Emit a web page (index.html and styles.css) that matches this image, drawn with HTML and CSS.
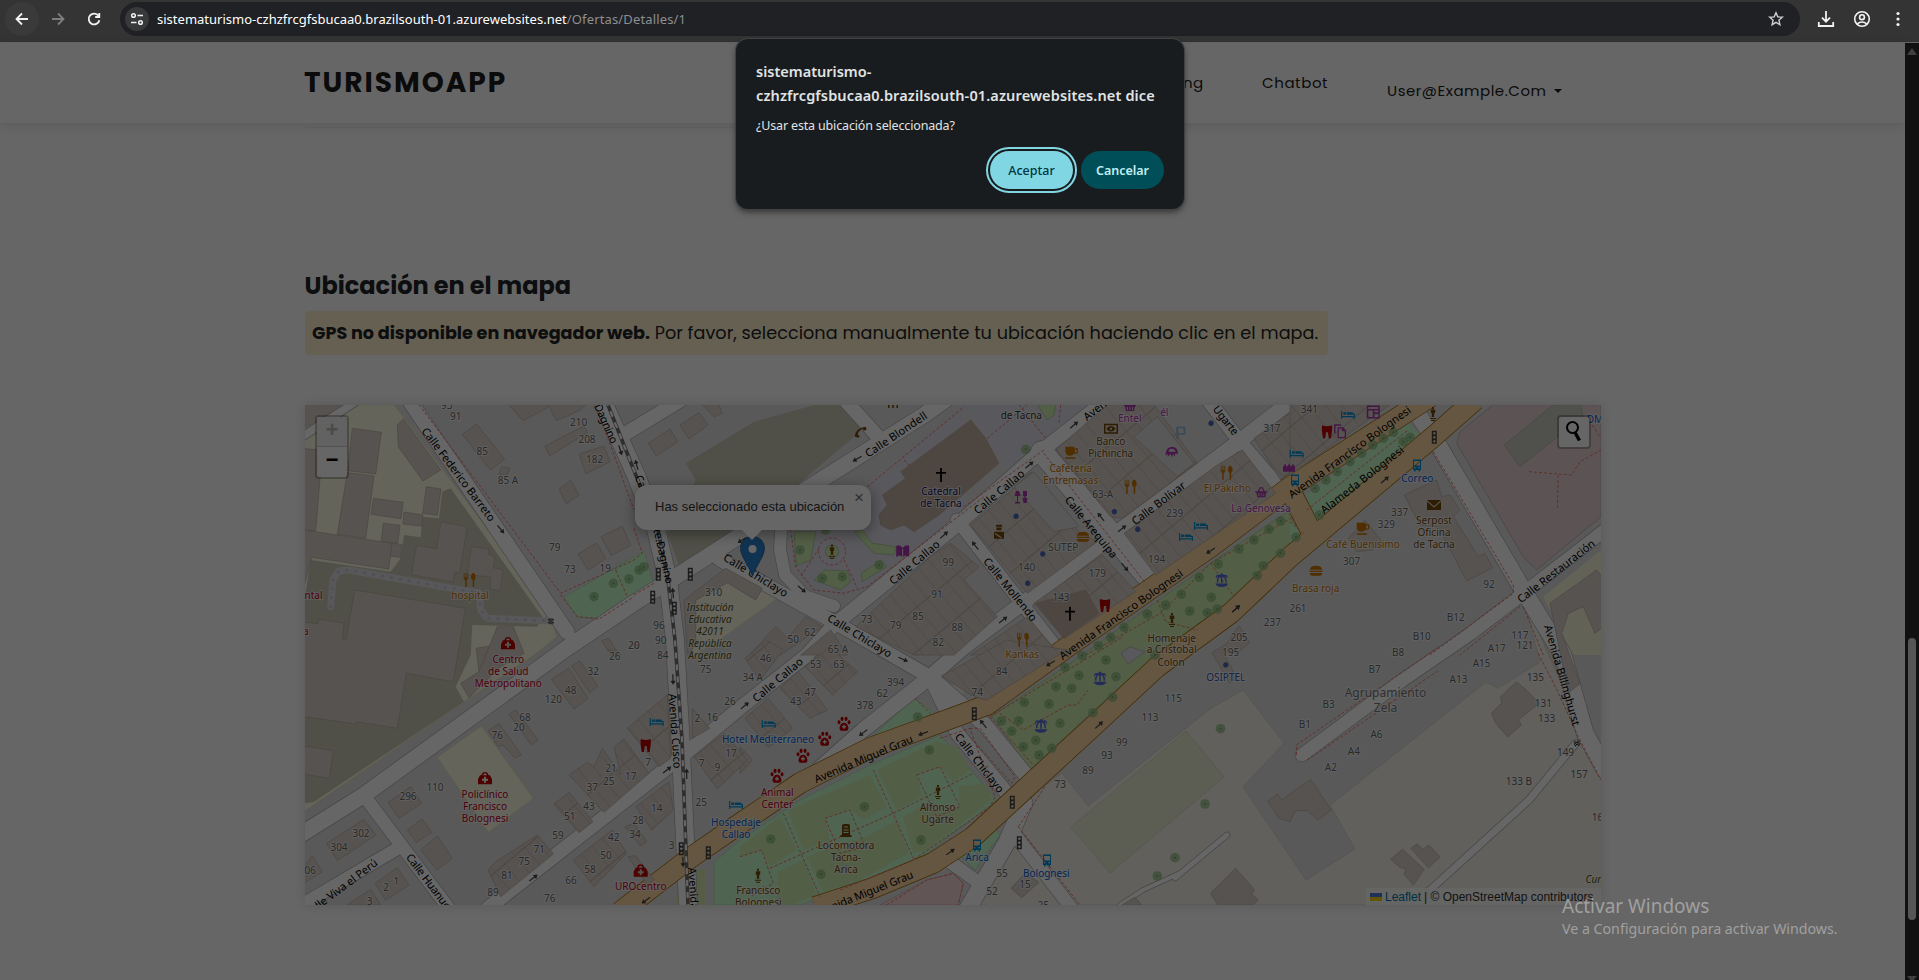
FILE: index.html
```html
<!DOCTYPE html>
<html lang="es">
<head>
<meta charset="utf-8">
<title>TurismoApp - Detalles</title>
<link rel="stylesheet" href="styles.css">
</head>
<body>
<div class="browser">
  <div class="toolbar">
    <div class="nav-icons">
      <svg class="back" width="34" height="34" viewBox="-17 -17 34 34"><path d="M6 0H-5M0 -5.5L-5.5 0L0 5.5"/></svg>
      <svg class="forward" width="34" height="34" viewBox="-17 -17 34 34"><path d="M-6 0H5M0 -5.5L5.5 0L0 5.5"/></svg>
      <svg class="reload" width="34" height="34" viewBox="-17 -17 34 34"><path d="M4.6 -3A5.4 5.4 0 1 0 5.4 1.2M5.3 -6V-2H1.2"/></svg>
    </div>
    <div class="omnibox">
      <span class="chip"><svg width="14" height="14" viewBox="0 0 14 14"><circle cx="3.5" cy="3.5" r="1.8"/><path d="M7.5 3.5H13M1 10.5H6.500"/><circle cx="10.500" cy="10.500" r="1.800"/></svg></span>
      <span class="url"><span class="host">sistematurismo-czhzfrcgfsbucaa0.brazilsouth-01.azurewebsites.net</span><span class="path">/Ofertas/Detalles/1</span></span>
      <svg class="star" width="18" height="18" viewBox="-9 -9 18 18"><path d="M0 -6.300L1.800 -2.100L6.300 -1.800L2.900 1.200L3.900 5.700L0 3.300L-3.900 5.700L-2.900 1.200L-6.300 -1.800L-1.800 -2.100Z"/></svg>
    </div>
    <div class="tool-icons">
      <svg width="20" height="20" viewBox="-10 -10 20 20"><path d="M0 -8V2.500M-4 -1.300L0 2.700L4 -1.300M-7.200 3V7H7.200V3"/></svg>
      <svg class="thin" width="20" height="20" viewBox="-10 -10 20 20"><circle r="7.300"/><circle cy="-1.800" r="2.400"/><path d="M-5 5.200Q0 .8 5 5.200"/></svg>
      <svg class="dots" width="20" height="20" viewBox="-10 -10 20 20"><circle cy="-5.500" r="1.600"/><circle r="1.600"/><circle cy="5.500" r="1.600"/></svg>
    </div>
  </div>
  <div class="viewport">
    <div class="page">
      <header class="site-header">
        <div class="brand">TURISMOAPP</div>
        <nav class="site-nav">
          <span class="link-ng">ng</span>
          <span class="link-chat">Chatbot</span>
          <span class="link-user"><span>User@Example.Com</span><i class="caret"></i></span>
        </nav>
      </header>
      <div class="card-end"></div>
      <main class="content">
        <h2 class="title">Ubicación en el mapa</h2>
        <p class="notice"><b>GPS no disponible en navegador web.</b> <span>Por favor, selecciona manualmente tu ubicación haciendo clic en el mapa.</span></p>
        <div class="map">
          <svg id="tiles" class="tiles" viewBox="305 405 1296 500" width="1296" height="500"></svg>
          <div class="zoom-control"><span class="zoom-in">+</span><span class="zoom-out">−</span></div>
          <div class="search-control"><svg width="30" height="30" viewBox="0 0 30 30"><circle cx="13.500" cy="10.500" r="5.500"/><path d="M16 15.500L20.500 23.500"/></svg></div>
          <svg class="pin" width="25" height="41" viewBox="0 0 25 41"><path d="M12.500 .5C5.500 .5 .6 5.800 .6 12.500C.6 20 8 28 12.500 40C17 28 24.400 20 24.400 12.500C24.400 5.800 19.500 .5 12.500 .5Z"/><circle cx="12.500" cy="13" r="4"/></svg>
          <div class="popup">Has seleccionado esta ubicación<span class="close">×</span></div>
          <div class="attribution"><i class="flag"></i><a>Leaflet</a> <span>| © OpenStreetMap contributors</span></div>
        </div>
      </main>
    </div>
    <div class="scrollbar"><i class="arrow-up"></i><i class="thumb"></i><i class="arrow-down"></i></div>
    <div class="shade"></div>
  </div>
  <div class="dialog">
    <div class="dialog-title"><span>sistematurismo-</span><span class="wide">czhzfrcgfsbucaa0.brazilsouth-01.azurewebsites.net dice</span></div>
    <div class="dialog-text">¿Usar esta ubicación seleccionada?</div>
    <div class="dialog-buttons"><button class="accept">Aceptar</button><button class="cancel">Cancelar</button></div>
  </div>
  <div class="watermark"><div class="wm-title">Activar Windows</div><div class="wm-text">Ve a Configuración para activar Windows.</div></div>
</div>
<script src="map.js"></script>
</body>
</html>
```
FILE: styles.css
```css
* { box-sizing: border-box; }
body { margin: 0; overflow: hidden; font-family: "Poppins", Inter, sans-serif; }
.browser { position: relative; width: 1919px; height: 980px; display: flex; flex-direction: column; overflow: hidden; }
.toolbar { height: 42px; flex: none; display: flex; align-items: flex-start; background: #343434; padding-top: 2px; font-family: "Noto Sans", sans-serif; }
.toolbar svg { fill: none; stroke: #f2f2f2; stroke-width: 1.8; }
.nav-icons { display: flex; width: 120px; padding-left: 5px; gap: 2px; }
.nav-icons .back { background: #3a3a3a; border-radius: 17px; }
.nav-icons .forward { stroke: #7e7e7e; }
.omnibox { width: 1680px; height: 34px; border-radius: 17px; background: #202124; display: flex; align-items: center; padding: 0 15px 0 5px; }
.chip { width: 24px; height: 24px; border-radius: 12px; background: #38393b; display: grid; place-items: center; margin-right: 8px; }
.chip svg { stroke-width: 1.5; }
.url { flex: 1; font-size: 13px; white-space: nowrap; color: #8d8f91; }
.host { color: #fff; letter-spacing: 0.01px; }
.path { letter-spacing: 0.15px; }
.toolbar .star { stroke: #cfcfcf; stroke-width: 1.4; }
.tool-icons { display: flex; align-items: center; height: 34px; gap: 16px; padding-left: 16px; }
.tool-icons .thin { stroke-width: 1.6; }
.toolbar .dots { fill: #f2f2f2; stroke: none; }

.viewport { position: relative; flex: 1; display: flex; background: #fff; }
.page { flex: 1; padding-top: 1px; }
.site-header { height: 80px; display: flex; padding-left: 304px; box-shadow: 0 2px 12px rgba(0,0,0,.12); color: #1c1c1c; }
.brand { width: 879px; padding-top: 21px; font-size: 28px; font-weight: 700; line-height: 38px; letter-spacing: 2px; }
.site-nav { display: flex; font-size: 15px; line-height: 20px; font-weight: 400; }
.link-ng { width: 79px; padding-top: 30px; letter-spacing: .3px; }
.link-chat { width: 125px; padding-top: 30px; letter-spacing: .6px; }
.link-user { padding-top: 38px; display: flex; letter-spacing: .5px; }
.caret { margin: 8px 0 0 8px; width: 8px; height: 4px; border: 4px solid transparent; border-top-color: #1c1c1c; border-bottom: 0; }
.card-end { width: 600px; height: 5px; margin-left: 305px; border-bottom: 1px solid #e6e6e6; }
.content { padding: 140px 0 0 305px; color: #212529; }
.title { margin: 0; height: 43px; font-size: 24px; line-height: 36px; font-weight: 700; color: #212529; text-indent: -.5px; }
.notice { margin: 0 0 50px; width: 1023px; height: 44px; padding-left: 7px; border-radius: 4px; background: #fff0cc; font-size: 17.6px; line-height: 44px; white-space: nowrap; }
.notice span { letter-spacing: .06px; }

.map { position: relative; width: 1296px; height: 500px; box-shadow: 0 0 12px rgba(0,0,0,.14); font-family: "Liberation Sans", Arial, sans-serif; }
.tiles { display: block; font-family: "Noto Sans", sans-serif; }
.tiles text { text-anchor: middle; dominant-baseline: central; paint-order: stroke; stroke: rgba(255,255,255,.6); stroke-width: 2px; stroke-linejoin: round; font-size: 10px; }
.tiles .num { fill: #666; }
.tiles .street { fill: #000; font-size: 11px; stroke: none; }
.tiles .food { fill: #c77400; }
.tiles .health { fill: #bf0018; }
.tiles .hotel { fill: #0060d8; }
.tiles .shop { fill: #ac39ac; }
.tiles .civic { fill: #734a08; }
.tiles .church { fill: #15156b; }
.tiles .office { fill: #3a55b0; }
.tiles .plain { fill: #333; }
.tiles .school { fill: #555512; font-style: italic; }
.tiles .place { fill: #777; font-size: 12px; }
.zoom-control { position: absolute; left: 10px; top: 10px; width: 34px; height: 64px; border: 2px solid rgba(0,0,0,.25); border-radius: 4px; display: flex; flex-direction: column; background: #fff; background-clip: padding-box; font: 700 22px/29px "Liberation Mono", monospace; text-align: center; }
.zoom-in { height: 30px; border-bottom: 1px solid #ccc; color: #bbb; background: #f4f4f4; }
.zoom-out { height: 30px; color: #000; }
.search-control { position: absolute; left: 1252px; top: 10px; width: 34px; height: 34px; border: 2px solid rgba(0,0,0,.25); border-radius: 4px; background: #fff; background-clip: padding-box; }
.search-control svg { display: block; fill: none; stroke: #000; stroke-width: 2; }
.search-control path { stroke-width: 3.4; }
.pin { position: absolute; left: 435px; top: 131px; fill: #2a81cb; stroke: #2369a5; }
.pin circle { fill: #fff; stroke: none; }
.popup { position: absolute; left: 330px; top: 80px; width: 236px; height: 45px; padding-left: 20px; border-radius: 12px; background: #fff; box-shadow: 0 3px 14px rgba(0,0,0,.4); color: #333; font-size: 13px; line-height: 44px; white-space: nowrap; }
.popup::after { content: ""; position: absolute; left: 107px; top: 45px; border: 10px solid transparent; border-top-color: #fff; border-bottom: 0; }
.close { position: absolute; right: 7px; top: 1px; font-size: 17px; line-height: 24px; color: #757575; }
.attribution { position: absolute; right: 0; bottom: 0; width: 235px; height: 17px; padding-left: 4px; display: flex; align-items: center; gap: 3px; background: rgba(255,255,255,.8); font-size: 12px; white-space: nowrap; color: #333; }
.attribution a { color: #0078a8; }
.flag { width: 12px; height: 8px; background: linear-gradient(#4c7be1 50%, #ffd500 50%); }

.scrollbar { position: relative; width: 14px; background: #2c2c2c; margin-top: 1px; display: flex; flex-direction: column; align-items: center; }
.arrow-up { margin-top: 5px; border: 5px solid transparent; border-bottom: 7px solid #9f9f9f; border-top: 0; }
.thumb { margin-top: 583px; width: 8px; height: 282px; border-radius: 4px; background: #d8d8d8; }
.arrow-down { margin-top: 56px; border: 5px solid transparent; border-top: 6px solid #9f9f9f; border-bottom: 0; }
.shade { position: absolute; inset: 0; background: rgba(0,0,0,.6); }

.dialog { position: absolute; left: 736px; top: 39px; width: 448px; height: 170px; padding: 20px 20px 0; border-radius: 12px; background: #181c1e; box-shadow: 0 0 0 1px #3f4142, 0 3px 6px rgba(0,0,0,.5); color: #e1e3e4; font-family: "Noto Sans", sans-serif; }
.dialog-title { display: flex; flex-direction: column; font-size: 14.500px; line-height: 24px; font-weight: 600; white-space: nowrap; }
.dialog-title .wide { letter-spacing: .13px; }
.dialog-text { margin-top: 9px; font-size: 12.500px; line-height: 20px; letter-spacing: -.16px; white-space: nowrap; }
.dialog-buttons { margin-top: 15px; display: flex; justify-content: flex-end; gap: 8px; }
.dialog-buttons button { width: 83px; height: 38px; border: 0; border-radius: 19px; padding: 0; font: 500 12.500px "Noto Sans", sans-serif; }
.accept { background: #80d7e3; color: #00363d; outline: 2px solid #80d7e3; outline-offset: 2px; }
.dialog-buttons .cancel { background: #004f58; color: #c2eef4; font-weight: 600; }
.watermark { position: absolute; left: 1562px; top: 892px; font-family: "Noto Sans", sans-serif; color: #a0a0a0; white-space: nowrap; }
.wm-title { font-size: 19px; line-height: 28px; }
.wm-text { font-size: 14.200px; line-height: 18px; }
```
FILE: map.js
```js
// Each sector is drawn in its own survey units: origin x, origin y, x scale, y scale.
const S = {
  a: [304, 400, 1 / 3, 1 / 3], b: [634, 400, 1 / 3, 1 / 3], c: [964, 400, 1 / 3, 1 / 3],
  d: [1290, 400, 1 / 3, 1 / 3], e: [304, 650, 1 / 3, 1 / 3], f: [740, 650, 1 / 3, 1 / 3],
  g: [1180, 600, 739 / 1568, 1 / 3], p: [0, 0, 1, 1]
};
const tiles = document.getElementById('tiles');
const at = (s, x, y) => [+(S[s][0] + x * S[s][2]).toFixed(1), +(S[s][1] + y * S[s][3]).toFixed(1)];
const pts = (s, str) => str.trim().split(' ').map(p => at(s, ...p.split(',').map(Number)).join(',')).join(' ');
let out = `<defs><pattern id="lots" width="13" height="34" patternUnits="userSpaceOnUse" patternTransform="rotate(-40)">
<rect width="13" height="34" fill="#d9d0c9"/><path d="M0 0V34M0 .5H13" stroke="#bdaea3" stroke-width="1" fill="none"/></pattern></defs>
<rect x="305" y="405" width="1296" height="500" fill="#e0dfdf"/>`;
const poly = (s, fill, list, stroke = 'none') => list.split(';').forEach(l => {
  out += `<polygon points="${pts(s, l)}" fill="${fill}" stroke="${stroke}" stroke-width=".7"/>`;
});

// land cover
poly('p', '#f2efe9', '1210,709 1243,690 1284,743 1243,787 1306,880 1355,849 1330,805 1486,682 1498,688 1540,662 1524,600 1605,780 1605,905 975,905 1025,800 1043,787 1062,773 1088,806', '#cfcac2');
poly('p', '#e6ead0', '1071,827 1110,873 1224,777 1186,731', '#cdd3b4');
poly('a', '#fbfbe3', '0,14 270,14 410,200 740,640 758,710 690,765 480,905 0,1235', '#e0e0a8');
poly('a', '#c7c7b4', '440,265 415,275 405,355 355,350 350,412 300,405 290,475 260,515 20,480 0,610 0,1210 30,1205 480,905 455,860 500,765 505,675 700,680 715,650');
poly('d', '#e6d2d2', '500,130 510,95 610,14 933,14 933,350 740,510 700,470', '#b0a0a0');
poly('d', '#c9c7c1', '643,135 790,14 870,14 880,50 690,200', '#aaa');
poly('d', '#f4f4da', '760,590 933,450 933,765 850,765');
poly('b', '#c7c7b4', '155,190 360,65 545,14 635,14 690,85 490,255 330,390 135,495 100,400 185,240');
poly('e', '#fbfbe3', '400,322 532,228 688,445 553,547', '#e0e0a8');
poly('b', '#fbfbe3', '185,600 280,548 365,600 385,565 430,595 235,735 175,765', '#e6e6b4');
poly('b', '#dddde8', '465,385 480,500 530,565 620,585 700,565 990,340 990,14 700,260');
poly('c', '#dddde8', '0,14 385,14 130,205 65,115');
poly('b', '#cdebb0', '480,395 545,395 530,480 487,497;660,395 685,390 715,430 785,440 780,465 720,460;540,540 570,510 640,512 650,545 620,570;682,520 740,480 758,500 685,545', '#9fbf8a');
poly('c', '#cdebb0', '220,14 275,14 270,45 250,60', '#9fbf8a');
poly('p', '#c8facc', '564,597 644,551 654,585 599,618 577,617;914,698 940,717 863,745;940,735 870,765 800,800 740,840 714,862 714,905 800,905 870,880 925,855 997,800;990,820 1000,835 975,870 960,855', '#a8d8ac');
poly('p', '#cdebb0', '1287,512 1303,536 1222,607 1150,660 1092,712 1030,770 992,716 1075,660 1215,560', '#a9c88c');
poly('d', '#c8facc', '20,305 350,60 390,105 75,380;0,365 45,400 0,445');
poly('f', '#cdebb0', '410,360 590,275 650,290 690,360 640,395 600,350 530,375 545,440 470,480;145,480 390,375 440,470 370,510 330,480 255,505 270,570 190,600;490,500 560,460 660,470 655,410 740,400 755,450 560,600 520,610;200,620 280,590 380,560 470,510 505,610 360,690 250,725;0,590 120,500 170,600 90,650 65,600 0,620;115,665 190,630 230,735 150,765 110,765');
poly('e', '#d5e8b0', '1135,665 1205,655 1205,765 1110,765');
poly('f', '#f2d5d5', '420,765 560,690 640,670 670,700 655,765', '#d0a0a0');
poly('f', '#f2efe9', '575,110 700,100 605,195;740,765 805,575 985,765');

// roads
const roads = [
  ['409,400 567,632', 15], ['300,835 364,795 567,648 634,603 691,567 744,533 794,497 924,415 945,400', 16],
  ['602,400 636,475 655,525 668,580 675,640 680,730 688,905', 18],
  ['719,559 834,622 885,651 930,677 957,733 1010,797', 14],
  ['488,908 681,757 740,708 807,655 834,625 957,525 1041,451 1100,405', 14],
  ['820,768 863,730 930,677 964,647 1031,597 1111,537 1237,443 1286,405', 15],
  ['957,520 1058,650', 13], ['1042,452 1153,583', 22], ['1208,400 1241,443 1283,492', 14],
  ['782,515 780,550 785,575 805,596 834,606', 12], ['845,400 881,440', 14], ['620,437 684,398', 14],
  ['930,677 985,725 1030,780', 15], ['1405,395 1437,443 1523,590 1563,655 1585,733 1605,770', 17],
  ['1605,530 1525,592 1470,634 1400,682 1302,755', 13], ['300,906 400,847', 13], ['365,797 450,910', 13],
  ['1024,803 1007,842 967,910', 17], ['1015,835 1073,910', 13], ['950,862 975,880', 13],
  ['1430,890 1529,800 1576,743', 7], ['1175,878 1227,835', 5], ['1120,905 1143,890 1180,873', 4], ['305,435 355,402', 8]
];
const line = (p, w, c, extra = '') => { out += `<polyline points="${p}" fill="none" stroke="${c}" stroke-width="${w}" stroke-linejoin="round" ${extra}/>`; };
roads.forEach(r => line(r[0], r[1] + 1.4, '#aaa', 'stroke-linecap="round"'));
roads.forEach(r => line(r[0], r[1], '#fff', 'stroke-linecap="round"'));
const main = ['1430,397 1290,487 1212,546 1070,645 987,705 955,717 870,748 800,783 735,827 690,858 620,912',
  '1475,400 1433,437 1290,557 1231,613 1157,667 1100,720 1013,800 973,837 933,863 873,888 815,907', '1290,490 1312,533'];
main.forEach(p => line(p, 21.5, '#a06b00'));
main.forEach(p => line(p, 20, '#fcd6a4'));
line('606,400 637,478 657,525 668,580 675,640 682,740 688,905', 3.6, '#707070');
line('606,400 637,478 657,525 668,580 675,640 682,740 688,905', 2.2, '#fff', 'stroke-dasharray="6 6"');

// buildings
const B = '#d9d0c9', E = '#b9a99c';
poly('a', B, '145,85 232,97 215,222 132,212;130,218 210,228 185,415 100,403;298,57 410,210 357,243 283,140 280,75;367,260 411,267 400,346 356,340;208,295 297,307 291,356 202,343;300,336 356,345 353,378 297,372;238,370 288,376 281,430 232,423;262,428 294,434 290,472 258,468;0,146 55,150 35,392 0,390;0,390 264,430 254,507 23,472 0,560;411,366 490,380 467,518 452,517 447,546 322,524 338,436 398,447;502,440 556,448 552,462 573,470 568,503 597,510 588,572 558,567 560,530 490,525;152,570 484,625 448,845 307,820 280,985 157,965 155,972 0,950 0,665 40,672 45,658 120,670 115,718 127,718;0,1038 88,1052 76,1135 0,1122;517,745 558,738 575,800 525,815;580,680 628,680 660,760 590,800 495,893 470,850 525,815;0,14 120,14 0,85;615,14 740,14 733,22 657,62;733,14 845,14 830,30 757,62;475,103 518,72 602,178 559,210;723,138 840,78 850,98 736,168;826,162 900,138 918,185 845,221;765,268 800,241 825,284 787,312;822,462 878,429 905,475 853,511;891,410 955,379 980,436 921,466;593,200 617,205 610,225 585,222;893,722 915,715 945,765 925,770', E);
poly('b', B, '137,75 195,38 222,75 165,117;43,130 108,87 131,125 67,168;205,14 255,14 265,40 240,50;150,600 275,505 385,565 365,600 280,548 185,600 185,735 160,765;345,765 425,680 460,715 515,650 565,680 440,765;500,765 590,690 640,765', E);
poly('b', '#c4b0a2', '990,75 800,215 815,235 745,285 760,315 735,345 740,375 770,390 810,375 840,395 915,345 1095,190 1055,115 1010,60', E);
poly('c', 'url(#lots)', '20,375 150,265 200,215 345,395 400,425 190,580;275,150 430,14 570,14 700,190 475,355 440,350;480,400 760,195 835,150 935,280 575,525;210,610 415,465 515,575 300,715;20,765 190,650 275,750;870,115 990,30 990,210 950,240', E);
poly('c', '#c4b0a2', '215,610 365,570 405,640 300,715', E);
poly('c', '#dcdcdc', '150,260 210,215 345,380 270,395;510,110 580,50 690,190 640,230', E);
poly('b', 'url(#lots)', '665,680 895,465 950,430 1035,500 990,540 1090,650 960,765 840,765', E);
poly('f', 'url(#lots)', '605,78 800,-30 980,0 740,150 700,140;15,205 85,145 158,235 85,293;120,115 175,65 263,180 210,205;195,50 270,-10 352,65 278,135;15,25 80,-30 130,0 60,90;0,290 38,330 0,370', E);
poly('d', 'url(#lots)', '0,14 300,14 0,225', E);
poly('d', B, '343,285 440,240 455,290 480,285 510,330 490,350 565,470 585,460 608,503 530,543 450,390 440,380 390,375;175,415 225,360 280,430 245,450 200,455;780,610 920,510 960,560 990,640 915,700 880,620 835,640 815,700 870,850 835,880', E);
poly('e', B, '742,88 795,55 852,145 810,177;803,48 827,33 882,108 857,128;552,242 585,220 652,315 632,324 597,285 583,290;615,193 635,180 702,270 682,285;252,457 320,410 353,460 285,505;310,540 355,507 383,548 337,577;350,600 400,558 445,625 398,660;68,580 180,508 215,555 100,632;0,650 25,617 55,665 0,700;213,700 280,653 315,705 245,750;130,765 200,718 230,765;1165,175 1217,235 1165,265;972,620 995,617 1050,690 1030,705;962,530 990,520 1028,575 1010,588;910,0 950,15 940,0', E);
poly('e', 'url(#lots)', '795,375 850,337 870,350 895,295 950,375 930,290 960,267 1035,370 900,487;970,235 1090,135 1100,325 1065,350;750,462 795,427 867,515 825,548;552,660 575,635 700,555 748,612 590,740;808,630 925,540 968,610 870,710;995,470 1095,395 1108,480 1043,540;1170,320 1260,250 1330,330 1240,417', E);
poly('g', B, '186,603 207,582 215,600 277,538 321,630 293,660 270,632 245,632 233,665 210,655;65,880 118,805 158,870 152,882 166,900 155,915 80,915;447,778 472,748 518,808 495,856 475,822 480,808 465,800;490,745 503,732 515,748 528,735 552,771 527,804;661,340 683,308 680,290 714,246 735,270 762,310 718,360 724,375 695,411 670,370;68,158 100,130 125,77 148,128 120,160 90,150 120,235 105,248', E);
poly('f', B, '813,715 855,670 897,697 845,743;1145,765 1185,742 1205,765', E);
poly('f', '#dddde8', '1143,10 1170,-10 1215,5 1165,42', '#aaa');
const lane = pts('a', '80,620 87,540 105,512 135,510 440,565 525,578 530,630 550,655 730,662');
line(lane, 7, '#dcdce0', 'stroke-linecap="round"');
line(lane, 3, '#c6c6cc', 'stroke-dasharray=".1 9" stroke-linecap="round"');

// footpaths
const path = (s, list) => list.split(';').forEach(l => line(pts(s, l), 1, '#f0776c', 'stroke-dasharray="3 2"'));
path('a', '345,14 770,580 990,480;770,585 820,650 885,657 990,590;875,14 990,330;935,510 970,590');
path('b', '0,385 25,460 0,480;60,550 0,585;470,390 485,500 540,570 630,580 700,560 1050,290;700,260 990,20;555,445 500,530;630,480 670,565;810,180 830,200');
path('c', '70,115 190,14;165,14 245,115;290,14 285,70;0,320 240,150;365,765 590,640 740,490;580,600 605,665 700,690;740,490 810,590;240,160 545,550;740,490 990,350');
path('d', '430,155 670,555 670,580 420,765;690,620 510,765;700,620 760,765;717,215 845,225 870,185 933,150;805,225 802,330;50,330 355,90;0,365 45,405;890,50 933,115');
path('g', '247,465 247,435 550,140;270,480 550,210;760,160 800,270 845,410 893,540');
path('f', '750,200 1150,-40;750,200 880,345;780,190 850,240 985,165 1010,165 1045,120;600,265 690,235 765,440 750,470 520,630 300,720;690,235 720,235 825,380 815,400 690,260;525,145 580,200;400,360 520,625;130,490 240,740;90,655 470,485 700,370;530,375 600,350 660,470 590,500 530,375;255,505 330,480 375,590 300,610 255,505;0,620 65,600 100,700 30,740;835,530 1020,765;835,530 915,410;440,765 560,690 640,670 670,700 655,765');
out += `<circle cx="832" cy="551.5" r="13.500" fill="none" stroke="#f0776c" stroke-dasharray="3 2"/><circle cx="832" cy="551.5" r="6.500" fill="#cdebb0" stroke="#9fbf8a"/>`;
const trees = { a: '870,590 928,550 975,537', b: '15,510 30,500 498,450 565,535 625,530 735,495 575,390', c: '950,363 915,388 870,420 825,447 763,492 950,460 898,497 880,527 706,532 652,583 742,592 605,615 550,642 677,633 730,638 760,627 480,682 440,712 403,737 185,148', d: '88,345 18,412 108,240 142,215 180,185 215,160 248,135 280,115 310,97 340,125 360,112 75,265', f: '533,201 568,300 373,470 92,567 243,673 543,570 853,157 948,110 1017,76 1098,30 1026,17 995,115 927,162 1128,80 1118,142 1059,188 960,220 836,212 784,213 815,244 850,290 887,271 897,315 935,295 975,52 1305,623 1252,678 1245,15', g: '86,386 53,612' };
for (const k in trees) trees[k].split(' ').forEach(t => { const [x, y] = at(k, ...t.split(',').map(Number)); out += `<circle cx="${x}" cy="${y}" r="4.800" fill="#8fbd80" opacity=".75"/><circle cx="${x}" cy="${y}" r="1" fill="#7a9e6a"/>`; });

// point symbols
const icons = {
  fork: ['#c77400', 'M-6 -7V-2Q-6 0 -4.500 0V7H-3V0Q-1.500 0 -1.500 -2V-7H-2.300V-2.500H-3.300V-7H-4.200V-2.500H-5.200V-7ZM3.500 -7C1 -7 .5 -1 3 0V7H4.500V0C7 -1 6 -7 3.500 -7Z'],
  bed: ['#0092da', 'M-7 -4H-5.800V1.300H5.800V-1H7V4H5.800V2.600H-5.800V4H-7ZM-4.800 -2.500H-2V0H-4.800ZM-1.300 -2.500H4.500L5.800 -1V0H-1.300Z'],
  tooth: ['#bf0000', 'M-5 -6Q0 -4 5 -6C5.500 0 4.500 2 4 7H1.800L1 1H-1L-1.800 7H-4C-4.500 2 -5.500 0 -5 -6Z'],
  med: ['#bf0000', 'M-3.500 -3C-3.500 -7.500 3.500 -7.500 3.500 -3H5L7 1V6H-7V1L-5 -3ZM-2 -3H2Q1.500 -5 0 -5T-2 -3ZM-1 -1.500V.5H-3V2.500H-1V4.500H1V2.500H3V.5H1V-1.500Z'],
  light: ['#444', 'M-2.500 -6.500H2.500V6.500H-2.500ZM0 -5.300A1.300 1.300 0 1 0 .1 -5.300ZM0 -1.300A1.300 1.300 0 1 0 .1 -1.300ZM0 2.700A1.300 1.300 0 1 0 .1 2.700Z'],
  paw: ['#bf0000', 'M0 -1C4 -1 6 6 3 7H-3C-6 6 -4 -1 0 -1ZM-5 -3.500A1.500 2 0 1 0 -4.900 -3.500ZM-2 -7A1.500 2.200 0 1 0 -1.900 -7ZM2 -7A1.500 2.200 0 1 0 2.100 -7ZM5 -3.500A1.500 2 0 1 0 5.100 -3.500ZM-.7 1V2.300H-2V3.700H-.7V5H.7V3.700H2V2.300H.7V1Z'],
  cross: ['#000', 'M-.9 -7H.9V-3H5V-1.300H.9V7H-.9V-1.300H-5V-3H-.9Z'],
  fountain: ['#576ddf', 'M-6.500 3.500H6.500Q5 7 0 7T-6.500 3.500ZM-.8 3V-3Q-3.500 -3 -3.500 2.500H-5Q-5.500 -1 -3.500 -3.500Q-5 -4 -5 -2H-6Q-6 -6.500 -2 -5Q0 -8.500 2 -5Q6 -6.500 6 -2H5Q5 -4 3.500 -3.500Q5.500 -1 5 2.500H3.500Q3.500 -3 .8 -3V3Z'],
  bus: ['#0092da', 'M-4 -5.500H4V5H3V6.500H1.500V5H-1.500V6.500H-3V5H-4ZM-3 -4V.5H3V-4ZM-3 2V3.200H-1.500V2ZM1.500 2V3.200H3V2Z'],
  statue: ['#734a08', 'M-1 -7H1V-5H-1ZM-2.200 -4.500H2.200V-1H1.200V3H-1.200V-1H-2.200ZM-3 4H3V5H-3ZM-2 6H2V7H-2Z'],
  stone: ['#734a08', 'M-4 5V-4Q-4 -6 -2 -6H2Q4 -6 4 -4V5H5.500V7H-5.500V5ZM-2 -3.500V-2.500H2V-3.500ZM-2.500 -.5V.5H2.500V-.5ZM-2.500 2V3H2.500V2Z'],
  cup: ['#c77400', 'M-6 -6H3V-4.500H6.500V0Q5.500 1.500 3 1Q1 3 -1.500 3Q-6 3 -6 -2ZM3.500 -3.300V-.3H5.300V-3.300ZM-6 4.500H4V6H-6Z'],
  burger: ['#c77400', 'M-6 -1Q-6 -5 0 -5T6 -1ZM-6.500 0H6.500V1.200H-6.500ZM-6 2.300H6V3Q6 5 4 5H-4Q-6 5 -6 3Z'],
  bank: ['#734a08', 'M-7 -5H7V5H-7ZM-5.500 -3.500V3.500H5.500V-3.500ZM-4.500 0Q-3 -2.700 0 -2.700T4.500 0Q3 2.700 0 2.700T-4.500 0ZM-1 -1V1H1V-1Z'],
  mail: ['#734a08', 'M-7 -5H7L0 1.200ZM-7 -3.500L0 2.800L7 -3.500V5H-7Z'],
  book: ['#ac39ac', 'M-6.500 -5Q-3 -7 0 -3Q3 -7 6.500 -5V6Q3 3 .5 6V-2H-.5V6Q-3 3 -6.500 6Z'],
  bag: ['#ac39ac', 'M-6 -1H-3.500L-1.500 -5H1.500L3.500 -1H6V.3H5L4 5H-4L-5 .3H-6ZM-2 -1H2L1 -3.800H-1ZM-3 1V4H-2V1ZM-.5 1V4H.5V1ZM2 1V4H3V1Z'],
  lamp: ['#ac39ac', 'M-5 -6H-2L-.5 -1H-3V5H-1V6.500H-6V5H-4V-1H-6.500ZM2 -6H6V-1H4.700V1H6.500L5.500 6H2.500L1.500 1H3.300V-1H2Z'],
  brush: ['#ac39ac', 'M-6 0Q-5 -6 1 -6Q7 -5 6 2L4 0L3 4L1.500 1L0 5L-1 1L-4 4V1L-6 3ZM-3 -1H4Q3 -4 0 -4T-3 -1Z'],
  copy: ['#ac39ac', 'M-6 -7H1V-5.500H-4.500V2H-6ZM-2.500 -4H3L6 -1V7H-2.500ZM-1.200 -2.700V5.700H4.700V0H2V-2.700Z'],
  news: ['#ac39ac', 'M-6.500 -6.500H6.500V6.500H-6.500ZM-5 -5V-3H5V-5ZM-5 -1.500V5H-.5V-1.500ZM1 -1.500V.3H5V-1.500ZM1 2V5H5V2Z'],
  bread: ['#ac39ac', 'M-6 4V-1L-4 -4L-2 -1L0 -4L2 -1L4 -4L6 -1V4Z'],
  phone: ['#734a08', 'M-6 5Q-5 -4 5 -5L6 -2L3 -1L2 -3Q-3 -1 -3 3L-1 4L-2 6Z'],
  columns: ['#734a08', 'M-5 -4H-3.500V2H-5ZM-.8 -4H.8V2H-.8ZM3.500 -4H5V2H3.500Z'],
  cop: ['#734a08', 'M-3 -7H3V-5H-3ZM-2.500 -4.300H2.500V-1.500H-2.500ZM-5 0H5V7H-5ZM-4 1V2.500L2 6.500L3 5.500Z'],
  dot: ['#4a67b5', 'M0 -2.700A2.700 2.700 0 1 0 .1 -2.700Z'],
  park: ['#8fb8d4', 'M-4 -6H5V2H-2V6H-4ZM-2 -4.500V.5H3.300V-4.500Z'],
  arrow: ['#444', 'M-5 -.6H1.500V-2.600L5.500 0L1.500 2.600V.6H-5Z'],
  gate: ['#111', 'M-3 -2H3V-1H-3ZM-3 1H3V2H-3ZM-1.500 -3H-.5V3H-1.500ZM.5 -3H1.500V3H.5Z']
};
const marks = {
  a: 'fork 497,540;med 612,730;arrow 590,388 50;arrow 949,150 72;gate 741,664',
  b: 'columns 777,18;phone 680,95 0;arrow 670,176 150;arrow 8,195 -105;cross 921,225;light 73,523;light 169,523;light 56,592;light 121,625;arrow 117,580 -95;statue 594,455;book 806,453;arrow 930,405 -42;arrow 503,567 40;arrow 325,420 148',
  c: 'bank 441,86;cup 322,158;fork 500,260;lamp 171,291;cop 105,395;burger 357,410;dot 156,349;dot 236,462;dot 191,550;dot 451,335;dot 521,388;dot 741,70;brush 623,158;park 649,98;fork 788,218;bag 892,277;bed 711,378;bed 666,411;tooth 423,615;cross 318,641;fork 177,719;fountain 773,540;statue 624,660;arrow 330,75 -40;arrow 196,195 -40;arrow 474,386 -38;arrow 411,351 -128;arrow 482,501 50;arrow 34,437 -128;arrow 117,660 -38;arrow 740,452 147;arrow 815,627 -42;bag 498,18;bread 975,203',
  d: 'tooth 111,94;copy 150,94;news 250,36;bed 174,44;bed 20,161;bus 15,240;bus 381,195;light 433,112;mail 432,315;cup 218,386;burger 78,512;statue 429,42;arrow 284,240 -40',
  e: 'med 543,385;tooth 1025,285;bed 1058,216;med 1010,662;light 1132,596;light 1213,608;arrow 1089,360 -38;arrow 688,684 -38;arrow 1148,372 -92;arrow 1137,635 88;arrow 1107,88 88;arrow 1026,751 143;bed 1296,465',
  f: 'bed 86,222;paw 312,221;paw 254,266;paw 189,317;paw 111,377;light 703,191;light 817,457;light 838,578;fountain 1080,85;fountain 903,227;statue 594,426;stone 318,540;statue 54,677;bus 711,585;bus 921,630;arrow 14,167 -40;arrow 489,28 25;arrow 370,248 142;arrow 550,250 160;arrow 932,40 148;arrow 730,222 -128;arrow 1077,225 -42;arrow 631,606 -35',
  g: 'dot 97,195;arrow 119,26 -42;gate 842,430 80'
};
for (const k in marks) marks[k].split(';').forEach(m => {
  const [n, c, r = 0] = m.split(' '); const [x, y] = at(k, ...c.split(',').map(Number));
  out += `<path transform="translate(${x} ${y}) rotate(${r})" fill="${icons[n][0]}" fill-rule="evenodd" d="${icons[n][1]}"/>`;
});

// captions
const put = (s, cls, t, x, y, r = 0, w) => {
  const [X, Y] = at(s, x, y);
  out += `<text class="${cls}" transform="translate(${X} ${Y}) rotate(${r})"${w ? ` textLength="${w}"` : ''}>${t}</text>`;
};
const nums = {
  a: '93 428,16;91 455,48;210 824,65;208 849,118;182 872,176;85 535,152;85_A 612,240;79 752,442;73 798,507;19 904,505;26 988,735;20 645,981',
  b: '310 239,575;96 75,676;90 80,721;20 0,735;62 528,695;50 478,716;65_A 612,747;73 698,657;79 785,674;85 852,649;91 909,581;99 943,487;88 970,681;82 913,725',
  c: '63-A 416,283;239 632,339;317 924,83;194 578,478;140 188,502;179 400,520;143 291,590;205 825,712;195 800,755;237 925,666',
  d: '341 58,26;337 329,336;329 289,372;307 185,484;261 24,625;92 597,551',
  e: '84 1076,15;26 932,19;32 868,63;48 800,119;120 748,147;68 663,201;76 580,256;75 1205,58;26 1278,152;2 1180,204;16 1225,200;7 1032,336;21 921,353;25 914,394;17 980,379;37 865,410;43 855,468;51 797,498;59 762,554;110 393,412;296 312,439;302 171,548;304 105,591;306 10,661;71 706,597;75 661,633;81 609,676;89 567,727;1 277,692;2 246,712;3 197,753;14 1058,473;28 1002,511;34 993,551;42 929,560;50 906,614;58 858,657;66 801,689;76 737,743;25 1192,457;7 1193,340;9 1240,350;17 1281,310;3 1103,585',
  f: '46 77,23;53 227,41;63 297,43;47 211,125;43 167,154;34_A 38,81;394 467,96;62 427,129;378 375,165;74 712,125;84 785,64;115 1300,145;113 1230,201;99 1145,275;93 1101,314;89 1044,359;73 961,401;55 786,668;52 756,724;15 855,703;25 910,765',
  g: 'B12 585,52;B10 513,109;B8 463,157;B7 413,206;B3 315,311;B1 265,372;A17 672,145;A15 640,189;A13 591,236;A6 417,403;A4 369,452;A2 320,502;117 721,104;121 732,135;135 754,231;131 771,309;133 778,355;149 818,455;157 847,522;133_B 719,543;163 892,650'
};
for (const k in nums) nums[k].split(';').forEach(n => { const [t, c] = n.split(' '); put(k, 'num', t.replace('_', ' '), ...c.split(',').map(Number)); });
[
  ['a', 'street', 'Calle Federico Barreto', 465, 222, 53, 114], ['a', 'street', 'Dagnino', 908, 70, 66, 42],
  ['b', 'street', 'Calle Blondell', 785, 102, -34, 72], ['b', 'street', 'Ca', 22, 244, 68], ['b', 'street', 'te.Dagnino', 90, 468, 77, 56],
  ['b', 'street', 'Calle Chiclayo', 366, 524, 31, 73], ['b', 'street', 'Calle Chiclayo', 678, 706, 31, 73], ['b', 'street', 'Calle Callao', 840, 486, -40, 62],
  ['c', 'street', 'Calle Callao', 104, 274, -40, 62], ['c', 'street', 'Avenida', 410, 14, -38, 42], ['c', 'street', 'Calle Arequipa', 383, 380, 51, 76],
  ['c', 'street', 'Calle Bolívar', 582, 308, -37, 64], ['c', 'street', 'Calle Mollendo', 140, 567, 51, 78], ['c', 'street', 'Ugarte', 787, 60, 52, 34],
  ['c', 'street', 'Avenida Francisco Bolognesi', 470, 642, -35, 148], ['d', 'street', 'Avenida Francisco Bolognesi', 178, 155, -36, 148],
  ['d', 'street', 'Alameda Bolognesi', 215, 238, -38, 102], ['d', 'street', 'Calle Restauración', 797, 512, -38, 95],
  ['g', 'street', 'Avenida Billinghurst', 812, 225, 74, 104], ['e', 'street', 'Avenida Cusco', 1115, 243, 86, 75], ['e', 'street', 'Avenida', 1170, 715, 86, 42],
  ['e', 'street', 'Calle Viva el Perú', 110, 712, -37, 88], ['e', 'street', 'Calle Huanuco', 380, 700, 53, 72],
  ['f', 'street', 'Calle Callao', 112, 88, -40, 62], ['f', 'street', 'Avenida Miguel Grau', 370, 325, -23, 106], ['f', 'street', 'Avenida Miguel Grau', 370, 730, -22, 106],
  ['f', 'street', 'Calle Chiclayo', 720, 338, 52, 72],
  ['a', 'food', 'hospital', 498, 586], ['a', 'health', 'ental', 20, 586], ['a', 'health', 'a', 5, 694],
  ['e', 'health', 'Centro', 613, 28], ['e', 'health', 'de Salud', 613, 64], ['e', 'health', 'Metropolitano', 613, 100],
  ['e', 'health', 'Policlínico', 543, 432], ['e', 'health', 'Francisco', 543, 468], ['e', 'health', 'Bolognesi', 543, 503], ['e', 'health', 'UROcentro', 1010, 708],
  ['b', 'church', 'Catedral', 921, 273], ['b', 'church', 'de Tacna', 921, 309],
  ['b', 'school', 'Institución', 228, 622], ['b', 'school', 'Educativa', 228, 657], ['b', 'school', '42011', 228, 692], ['b', 'school', 'República', 228, 729], ['b', 'school', 'Argentina', 228, 765],
  ['c', 'plain', 'de Tacna', 172, 45], ['c', 'shop', 'Entel', 497, 55], ['c', 'shop', 'él', 601, 35], ['c', 'civic', 'Banco', 440, 124], ['c', 'civic', 'Pichincha', 440, 160],
  ['c', 'food', 'Cafeteria', 320, 205], ['c', 'food', 'Entremasas', 320, 241], ['c', 'food', 'El Pakicho', 790, 263], ['c', 'shop', 'La Genovesa', 891, 324],
  ['c', 'num', 'SUTEP', 298, 442], ['c', 'food', 'Kankas', 175, 762], ['c', 'civic', 'Homenaje', 623, 713], ['c', 'civic', 'a Cristobal', 623, 748], ['f', 'civic', 'Colon', 1293, 35],
  ['d', 'hotel', 'Correo', 382, 235], ['d', 'civic', 'Serpost', 432, 361], ['d', 'civic', 'Oficina', 432, 397], ['d', 'civic', 'de Tacna', 432, 433],
  ['d', 'food', 'Café Buenísimo', 219, 433], ['d', 'food', 'Brasa roja', 77, 564], ['d', 'hotel', 'DM', 915, 58],
  ['g', 'office', 'OSIPTEL', 97, 232], ['g', 'place', 'Agrupamiento', 436, 276], ['g', 'place', 'Zela', 436, 323], ['g', 'school', 'Cuna', 885, 837],
  ['p', 'hotel', 'Hotel Mediterraneo', 768, 739], ['f', 'health', 'Animal', 112, 425], ['f', 'health', 'Center', 112, 461],
  ['p', 'hotel', 'Hospedaje', 736, 822], ['p', 'hotel', 'Callao', 736, 834],
  ['f', 'civic', 'Alfonso', 593, 470], ['f', 'civic', 'Ugarte', 593, 506], ['f', 'civic', 'Locomotora', 318, 585], ['f', 'civic', 'Tacna-', 318, 621], ['f', 'civic', 'Arica', 318, 657],
  ['f', 'civic', 'Francisco', 55, 720], ['f', 'civic', 'Bolognesi', 55, 755], ['f', 'hotel', 'Arica', 711, 621], ['f', 'hotel', 'Bolognesi', 919, 668]
].forEach(l => put(...l));
tiles.innerHTML = out;
```
